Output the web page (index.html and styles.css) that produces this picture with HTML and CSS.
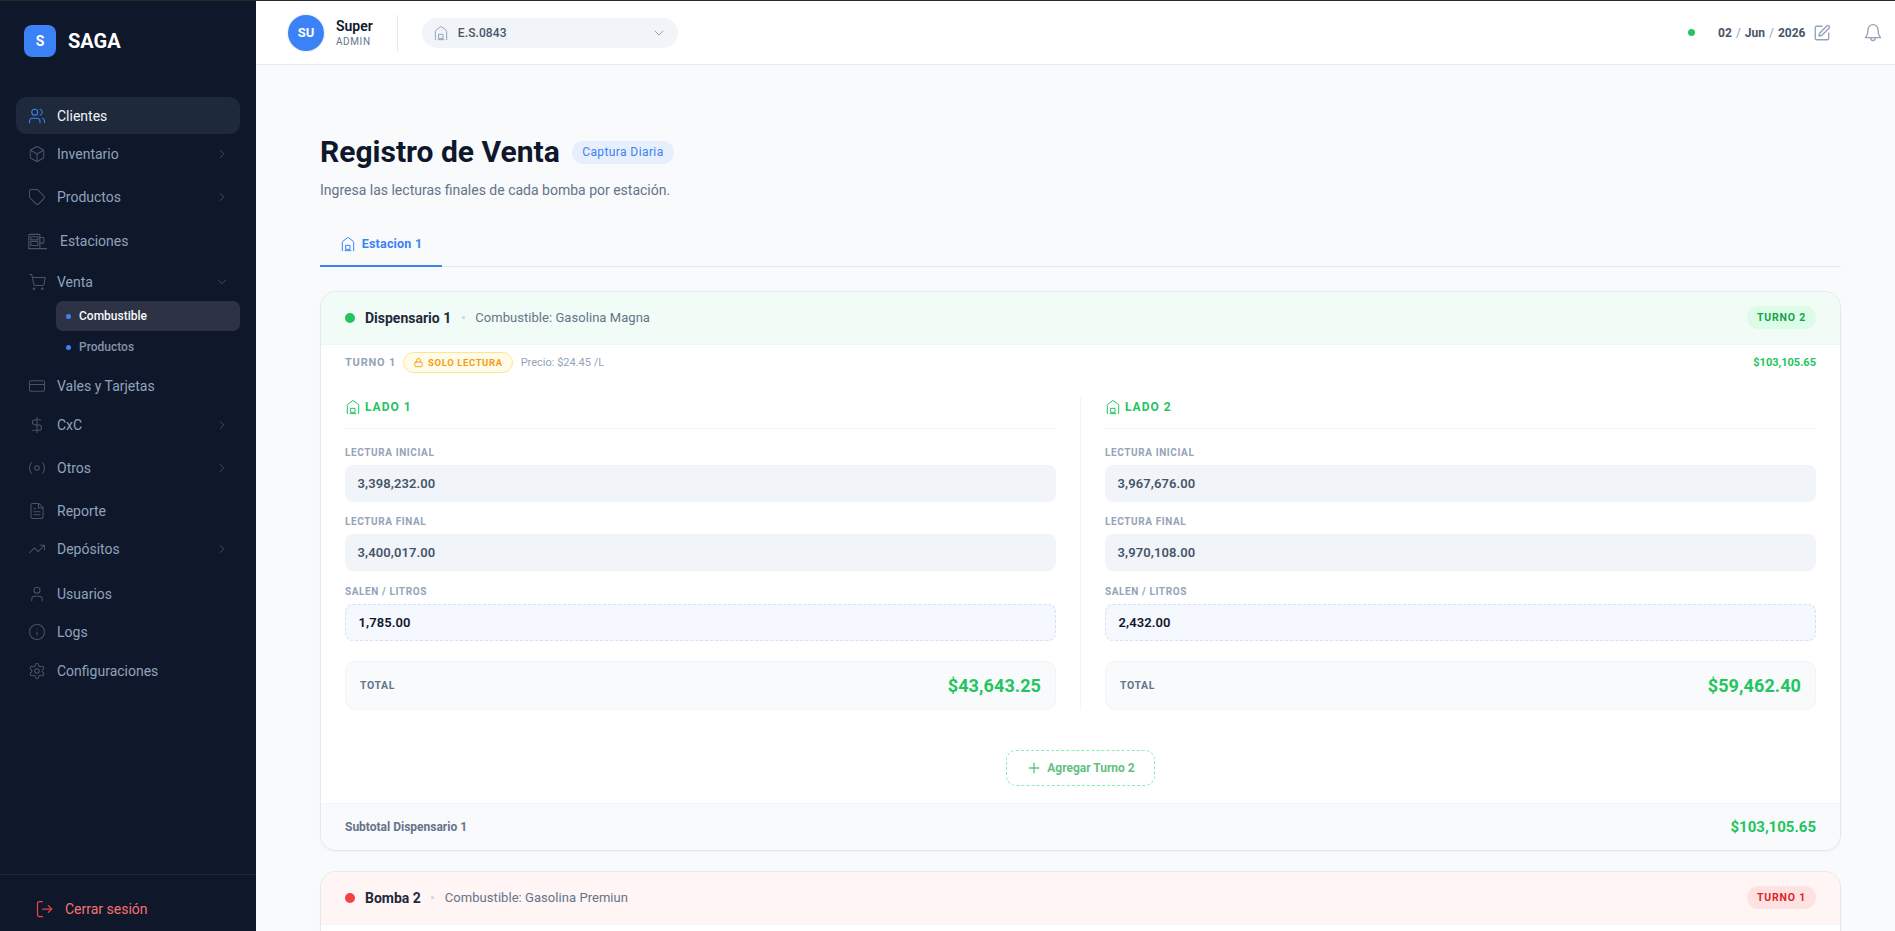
FILE: index.html
```html
<!DOCTYPE html>
<html lang="es">
<head>
<meta charset="utf-8">
<title>Registro de Venta</title>
<link rel="stylesheet" href="styles.css">
</head>
<body>
<svg class="defs" width="0" height="0" aria-hidden="true">
  <symbol id="house" viewBox="0 0 24 24"><path d="M3.500 22V9.500a2 2 0 0 1 .8-1.600l6.500-5a2 2 0 0 1 2.400 0l6.500 5a2 2 0 0 1 .8 1.600V22"/><path d="M7.500 22h9"/><rect x="9" y="14" width="6" height="6"/></symbol>
  <symbol id="chev-r" viewBox="0 0 24 24"><path d="m9 6 6 6-6 6"/></symbol>
  <symbol id="chev-d" viewBox="0 0 24 24"><path d="m6 9 6 6 6-6"/></symbol>
</svg>
<div class="app">
  <aside class="sidebar">
    <div class="brand"><span class="logo">S</span><span class="brand-name">SAGA</span></div>
    <nav class="nav">
      <a class="item active"><svg class="ic" viewBox="0 0 24 24"><path d="M16 21v-2a4 4 0 0 0-4-4H6a4 4 0 0 0-4 4v2"/><circle cx="9" cy="7" r="4"/><path d="M22 21v-2a4 4 0 0 0-3-3.870"/><path d="M16 3.130a4 4 0 0 1 0 7.750"/></svg>Clientes</a>
      <div class="group tight"><a class="item"><svg class="ic" viewBox="0 0 24 24"><path d="M21 8a2 2 0 0 0-1-1.730l-7-4a2 2 0 0 0-2 0l-7 4A2 2 0 0 0 3 8v8a2 2 0 0 0 1 1.730l7 4a2 2 0 0 0 2 0l7-4A2 2 0 0 0 21 16Z"/><path d="m3.300 7 8.700 5 8.700-5"/><path d="M12 22V12"/></svg>Inventario<svg class="chev"><use href="#chev-r"/></svg></a></div>
      <div class="group tight"><a class="item"><svg class="ic" viewBox="0 0 24 24"><path d="M2 4a2 2 0 0 1 2-2h7.600a2 2 0 0 1 1.400.6l8.400 8.400a2 2 0 0 1 0 2.800l-7.600 7.600a2 2 0 0 1-2.800 0L2.600 13A2 2 0 0 1 2 11.600Z"/></svg>Productos<svg class="chev"><use href="#chev-r"/></svg></a></div>
      <a class="item tall"><svg class="ic wide" viewBox="0 0 24 20"><path d="M1 19V2a1 1 0 0 1 1-1h12a1 1 0 0 1 1 1v17"/><path d="M0 19h24"/><rect x="3.500" y="4" width="9" height="4"/><rect x="3.500" y="10" width="9" height="5"/><path d="M15 5h4a1 1 0 0 1 1 1v5a1 1 0 0 1-1 1h-4"/></svg>Estaciones</a>
      <div class="group venta">
        <a class="item"><svg class="ic" viewBox="0 0 24 24"><circle cx="8" cy="21" r="1"/><circle cx="19" cy="21" r="1"/><path d="M2 2h3l2.700 13a2 2 0 0 0 2 1.600h9.700a2 2 0 0 0 2-1.600L23 6H6"/></svg>Venta<svg class="chev"><use href="#chev-d"/></svg></a>
        <div class="subnav">
          <a class="subitem on"><i class="bullet"></i>Combustible</a>
          <a class="subitem"><i class="bullet"></i>Productos</a>
        </div>
      </div>
      <a class="item"><svg class="ic" viewBox="0 0 24 24"><rect x="2" y="5" width="20" height="14" rx="2"/><path d="M2 10h20"/></svg>Vales y Tarjetas</a>
      <div class="group"><a class="item"><svg class="ic" viewBox="0 0 24 24"><path d="M12 2v20"/><path d="M17 5H9.500a3.500 3.500 0 0 0 0 7h5a3.500 3.500 0 0 1 0 7H6"/></svg>CxC<svg class="chev"><use href="#chev-r"/></svg></a></div>
      <div class="group"><a class="item"><svg class="ic" viewBox="0 0 24 24"><circle cx="12" cy="12" r="3"/><path d="M4.500 5C1.200 9 1.200 15 4.500 19"/><path d="M19.500 5c3.300 4 3.300 10 0 14"/></svg>Otros<svg class="chev"><use href="#chev-r"/></svg></a></div>
      <a class="item"><svg class="ic" viewBox="0 0 24 24"><path d="M14.500 2H6a2 2 0 0 0-2 2v16a2 2 0 0 0 2 2h12a2 2 0 0 0 2-2V7.500Z"/><path d="M14 2v6h6"/><path d="M8 13h8"/><path d="M8 17h8"/><path d="M8 9h2"/></svg>Reporte</a>
      <div class="group loose"><a class="item"><svg class="ic" viewBox="0 0 24 24"><path d="m22 7-8.500 8.500-5-5L2 17"/><path d="M16 7h6v6"/></svg>Depósitos<svg class="chev"><use href="#chev-r"/></svg></a></div>
      <a class="item"><svg class="ic" viewBox="0 0 24 24"><path d="M19 21v-2a4 4 0 0 0-4-4H9a4 4 0 0 0-4 4v2"/><circle cx="12" cy="7" r="4"/></svg>Usuarios</a>
      <a class="item"><svg class="ic" viewBox="0 0 24 24"><circle cx="12" cy="12" r="10"/><path d="M12 16v-4"/><path d="M12 8h.01"/></svg>Logs</a>
      <a class="item"><svg class="ic" viewBox="0 0 24 24"><path d="M12.220 2h-.44a2 2 0 0 0-2 2v.18a2 2 0 0 1-1 1.730l-.43.25a2 2 0 0 1-2 0l-.15-.08a2 2 0 0 0-2.730.73l-.22.38a2 2 0 0 0 .73 2.730l.15.1a2 2 0 0 1 1 1.720v.51a2 2 0 0 1-1 1.740l-.15.09a2 2 0 0 0-.73 2.730l.22.38a2 2 0 0 0 2.730.73l.15-.08a2 2 0 0 1 2 0l.43.25a2 2 0 0 1 1 1.730V20a2 2 0 0 0 2 2h.44a2 2 0 0 0 2-2v-.18a2 2 0 0 1 1-1.730l.43-.25a2 2 0 0 1 2 0l.15.08a2 2 0 0 0 2.730-.73l.22-.39a2 2 0 0 0-.73-2.730l-.15-.08a2 2 0 0 1-1-1.740v-.5a2 2 0 0 1 1-1.740l.15-.09a2 2 0 0 0 .73-2.730l-.22-.38a2 2 0 0 0-2.730-.73l-.15.08a2 2 0 0 1-2 0l-.43-.25a2 2 0 0 1-1-1.730V4a2 2 0 0 0-2-2z"/><circle cx="12" cy="12" r="3"/></svg>Configuraciones</a>
    </nav>
    <div class="logout"><a class="logout-link"><svg class="ic-out" viewBox="0 0 24 24"><path d="M9 3H5a2 2 0 0 0-2 2v14a2 2 0 0 0 2 2h4"/><path d="m16 16 4-4-4-4"/><path d="M20 12H9"/></svg>Cerrar sesión</a></div>
  </aside>

  <div class="content">
    <header class="topbar">
      <div class="user">
        <span class="avatar">SU</span>
        <div class="user-text"><div class="user-name">Super</div><div class="user-role">ADMIN</div></div>
      </div>
      <div class="select">
        <svg class="house select-ic"><use href="#house"/></svg>
        <span class="select-text">E.S.0843</span>
        <svg class="select-chev"><use href="#chev-d"/></svg>
      </div>
      <div class="top-right">
        <i class="status"></i>
        <div class="date"><span>02</span><em>/</em><span>Jun</span><em>/</em><span>2026</span></div>
        <svg class="edit" viewBox="0 0 24 24"><path d="M12 3H5a2 2 0 0 0-2 2v14a2 2 0 0 0 2 2h14a2 2 0 0 0 2-2v-7"/><path d="M18.400 2.600a2.120 2.120 0 0 1 3 3L12 15l-4 1 1-4Z"/></svg>
        <svg class="bell" viewBox="0 0 24 24"><path d="M6 8a6 6 0 0 1 12 0c0 7 2.500 8.500 3 9.500H3c.5-1 3-2.500 3-9.500"/><path d="M9.500 17.500v1a2.500 2.500 0 0 0 5 0v-1"/></svg>
      </div>
    </header>

    <main class="main">
      <div class="title-row"><h1 class="title">Registro de Venta</h1><span class="title-badge">Captura Diaria</span></div>
      <p class="subtitle">Ingresa las lecturas finales de cada bomba por estación.</p>
      <div class="tabs"><a class="tab"><svg class="house tab-ic"><use href="#house"/></svg>Estacion 1</a></div>

      <section class="card">
        <div class="card-head green">
          <i class="dot dot-green"></i><span class="pump">Dispensario 1</span><i class="sep"></i><span class="fuel">Combustible: Gasolina Magna</span>
          <span class="turn-pill pill-green">TURNO 2</span>
        </div>
        <div class="turn-row">
          <span class="turn-label">TURNO 1</span>
          <span class="lock-badge"><svg class="lock" viewBox="0 0 24 24"><rect x="4" y="11" width="16" height="10" rx="2"/><path d="M8 11V7a4 4 0 0 1 8 0v4"/></svg>SOLO LECTURA</span>
          <span class="price">Precio: $24.45 /L</span>
          <span class="turn-total">$103,105.65</span>
        </div>
        <div class="sides">
          <div class="side side-l">
            <div class="side-head"><svg class="house side-ic"><use href="#house"/></svg>LADO 1</div>
            <label class="lbl">LECTURA INICIAL</label><div class="field">3,398,232.00</div>
            <label class="lbl">LECTURA FINAL</label><div class="field">3,400,017.00</div>
            <label class="lbl lbl-salen">SALEN / LITROS</label><div class="field calc">1,785.00</div>
            <div class="total"><span class="total-lbl">TOTAL</span><span class="total-val">$43,643.25</span></div>
          </div>
          <div class="side side-r">
            <div class="side-head"><svg class="house side-ic"><use href="#house"/></svg>LADO 2</div>
            <label class="lbl">LECTURA INICIAL</label><div class="field">3,967,676.00</div>
            <label class="lbl">LECTURA FINAL</label><div class="field">3,970,108.00</div>
            <label class="lbl lbl-salen">SALEN / LITROS</label><div class="field calc">2,432.00</div>
            <div class="total"><span class="total-lbl">TOTAL</span><span class="total-val">$59,462.40</span></div>
          </div>
        </div>
        <div class="add-wrap"><a class="add"><svg class="plus" viewBox="0 0 24 24"><path d="M5 12h14"/><path d="M12 5v14"/></svg>Agregar Turno 2</a></div>
        <div class="card-foot"><span class="foot-lbl">Subtotal Dispensario 1</span><span class="foot-val">$103,105.65</span></div>
      </section>

      <section class="card">
        <div class="card-head red">
          <i class="dot dot-red"></i><span class="pump">Bomba 2</span><i class="sep"></i><span class="fuel">Combustible: Gasolina Premiun</span>
          <span class="turn-pill pill-red">TURNO 1</span>
        </div>
        <div class="card-rest"></div>
      </section>
    </main>
  </div>
</div>
</body>
</html>
```
FILE: styles.css
```css
* { box-sizing: border-box; }
html, body { margin: 0; height: 100%; overflow: hidden; }
body { font-family: Roboto, "Liberation Sans", sans-serif; color: #0f172a; background: #f8fafc; border-top: 1px solid #27272a; }
a { text-decoration: none; color: inherit; display: flex; }
.defs { position: absolute; }
svg { fill: none; stroke: currentColor; stroke-width: 1.5; stroke-linecap: round; stroke-linejoin: round; flex: none; }
.app { display: flex; height: 100%; }

/* sidebar */
.sidebar { width: 256px; flex: none; background: #0f172a; display: flex; flex-direction: column; color: #94a3b8; }
.brand { display: flex; gap: 12px; padding: 24px 24px 0; height: 96px; align-items: flex-start; }
.logo { width: 32px; height: 32px; border-radius: 8px; background: #3b82f6; color: #fff; font-size: 14px; font-weight: 700; display: flex; align-items: center; justify-content: center; }
.brand-name { font-size: 20px; font-weight: 700; color: #fff; line-height: 32px; }
.nav { display: flex; flex-direction: column; gap: 1.500px; padding: 0 16px; flex: 1; }
.item { height: 37px; align-items: center; padding: 0 12px; border-radius: 10px; font-size: 14px; color: #8fa3bd; }
.item.active { background: #1e293b; color: #f1f5f9; }
.item.tall { height: 41px; }
.ic { width: 18px; height: 18px; margin-right: 11px; color: #475569; stroke-width: 1.4; }
.active .ic { color: #3b82f6; }
.ic.wide { width: 19px; height: 17px; margin-right: 13px; }
.chev { width: 14px; height: 14px; margin-left: auto; margin-right: -1px; color: #475569; }
.group { padding-bottom: 4.600px; }
.group.tight { padding-bottom: 4px; }
.group.loose { padding-bottom: 6.200px; }
.venta { padding-bottom: 0; }
.subnav { padding-left: 40px; display: flex; flex-direction: column; gap: 1px; margin-top: 1px; margin-bottom: 4px; }
.subitem { height: 30px; align-items: center; border-radius: 7px; padding-left: 10px; font-size: 12px; color: #8493a8; font-weight: 500; }
.subitem.on { background: #2d3345; color: #f8fafc; }
.bullet { width: 5px; height: 5px; border-radius: 50%; background: #3b82f6; margin-right: 8px; }
.logout { height: 57px; border-top: 1px solid #1e293b; padding: 12px 35px 0; display: flex; align-items: center; }
.logout-link { align-items: center; color: #f87171; font-size: 14px; }
.ic-out { width: 20px; height: 20px; margin-right: 10px; color: #ef4444; }

/* topbar */
.content { flex: 1; min-width: 0; display: flex; flex-direction: column; }
.topbar { height: 64px; flex: none; background: #fff; border-bottom: 1px solid #e2e8f0; display: flex; align-items: center; padding: 0 12.500px 0 32px; }
.user { display: flex; align-items: center; height: 36px; padding-right: 24px; border-right: 1px solid #e2e8f0; margin-right: 24px; }
.avatar { width: 36px; height: 36px; border-radius: 50%; background: #3b82f6; color: #fff; font-size: 13px; font-weight: 700; display: flex; align-items: center; justify-content: center; box-shadow: 0 0 0 1.500px #f1f5f9; margin-right: 12px; }
.user-name { font-size: 14px; font-weight: 600; line-height: 18px; color: #0f172a; }
.user-role { font-size: 10px; letter-spacing: .6px; line-height: 13px; color: #64748b; }
.select { width: 256px; height: 30px; border-radius: 15px; background: #f1f5f9; display: flex; align-items: center; padding: 0 11px 0 11px; }
.house { width: 16px; height: 16px; }
.select-ic { color: #94a3b8; margin-right: 9px; }
.select-text { font-size: 12px; font-weight: 500; color: #475569; letter-spacing: .1px; }
.select-chev { width: 16px; height: 16px; margin-left: auto; color: #94a3b8; }
.top-right { margin-left: auto; display: flex; align-items: center; }
.status { width: 7px; height: 7px; border-radius: 50%; background: #22c55e; margin-right: 23px; }
.date { display: flex; gap: 4px; font-size: 12px; font-weight: 700; color: #475569; }
.date em { font-style: normal; font-weight: 400; color: #94a3b8; }
.edit { width: 18px; height: 18px; color: #94a3b8; margin-left: 7px; stroke-width: 1.800; }
.bell { width: 20px; height: 20px; color: #94a3b8; margin-left: 32px; stroke-width: 1.600; }

/* main */
.main { flex: 1; min-height: 0; overflow: hidden; padding: 69px 54px 0 64px; }
.title-row { display: flex; align-items: center; gap: 12px; height: 36px; }
.title { margin: 0; font-size: 30px; font-weight: 700; line-height: 36px; color: #0f172a; }
.title-badge { height: 23px; padding: 0 10.500px; border-radius: 12px; background: #e7effc; color: #3b82f6; font-size: 12px; font-weight: 400; line-height: 23px; letter-spacing: .4px; }
.subtitle { margin: 10px 0 0; font-size: 14px; line-height: 20px; color: #64748b; }
.tabs { margin-top: 22px; height: 45px; border-bottom: 1px solid #e2e8f0; display: flex; }
.tab { width: 122px; height: 45px; border-bottom: 2px solid #3b82f6; align-items: center; justify-content: center; font-size: 12.500px; font-weight: 700; color: #3b82f6; letter-spacing: .2px; }
.tab-ic { margin-right: 6px; }

.card { margin-top: 24px; background: #fff; border: 1px solid #e2e8f0; border-radius: 16px; overflow: hidden; box-shadow: 0 1px 2px rgba(15, 23, 42, .04); }
.card + .card { margin-top: 20px; }
.card-head { height: 53px; display: flex; align-items: center; padding: 0 24px 1px; border-bottom: 1px solid #f1f5f9; }
.green { background: #f1fcf6; }
.red { background: #fef5f4; }
.dot { width: 10px; height: 10px; border-radius: 50%; margin-right: 10px; }
.dot-green { background: #22c55e; }
.dot-red { background: #ef4444; }
.pump { font-size: 14px; font-weight: 700; color: #1e293b; }
.sep { width: 3px; height: 3px; border-radius: 50%; background: #cbd5e1; margin: 0 10.500px; }
.fuel { font-size: 13px; font-weight: 400; letter-spacing: .05px; color: #64748b; }
.turn-pill { margin-left: auto; height: 23px; line-height: 23px; padding: 0 10px; border-radius: 12px; font-size: 10.500px; font-weight: 700; letter-spacing: .8px; }
.pill-green { background: #dcfce7; color: #16a34a; }
.pill-red { background: #fee2e2; color: #dc2626; }
.card-rest { height: 60px; }

.turn-row { display: flex; align-items: center; padding: 7px 24px 0; height: 28px; }
.turn-label { font-size: 11px; font-weight: 700; letter-spacing: .8px; color: #94a3b8; margin-right: 7px; }
.lock-badge { display: flex; align-items: center; height: 21px; padding: 0 9px; border-radius: 11px; background: #fffbeb; border: 1px solid #fde68a; color: #f59e0b; font-size: 9.500px; font-weight: 700; letter-spacing: .6px; }
.lock { width: 11px; height: 11px; margin-right: 4px; stroke-width: 2; }
.price { font-size: 11px; color: #94a3b8; margin-left: 8px; }
.turn-total { margin-left: auto; font-size: 11px; font-weight: 700; color: #22c55e; }

.sides { display: grid; grid-template-columns: 735px 1fr; padding: 0 24px; margin-top: 24px; }
.side-l { padding-right: 24px; }
.side-r { padding-left: 24px; border-left: 1px solid #f1f5f9; }
.side-head { display: flex; align-items: center; height: 32px; padding-bottom: 11px; border-bottom: 1px solid #f1f5f9; color: #22c55e; font-size: 12px; font-weight: 700; letter-spacing: 1px; margin-bottom: 16px; }
.side-ic { margin-right: 4px; }
.lbl { display: block; font-size: 10px; font-weight: 700; letter-spacing: .6px; line-height: 15px; color: #94a3b8; margin-bottom: 5px; }
.lbl-salen { padding-top: 1px; }
.field { height: 37px; border-radius: 8px; background: #f1f5f9; display: flex; align-items: center; padding: 0 12.500px; font-size: 13px; font-weight: 600; letter-spacing: .1px; color: #475569; margin-bottom: 12px; }
.field.calc { background: #f5f8fe; border: 1px dashed #d2e2fb; color: #0f172a; margin-bottom: 20px; }
.total { height: 49px; border-radius: 10px; background: #f8fafc; border: 1px solid #f1f5f9; display: flex; align-items: center; justify-content: space-between; padding: 0 14px; }
.total-lbl { font-size: 10.500px; font-weight: 700; letter-spacing: .6px; color: #64748b; }
.total-val { font-size: 18px; font-weight: 700; color: #22c55e; letter-spacing: .1px; }
.add-wrap { display: flex; justify-content: center; padding: 40px 0 17px; }
.add { width: 149px; height: 36px; align-items: center; justify-content: center; border: 1px dashed #86efac; border-radius: 10px; font-size: 12px; font-weight: 700; color: #62c083; }
.plus { width: 16px; height: 16px; margin-right: 5px; stroke-width: 2; }
.card-foot { height: 47px; display: flex; align-items: center; justify-content: space-between; padding: 0 24px; background: #f8fafc; border-top: 1px solid #f1f5f9; }
.foot-lbl { font-size: 12px; font-weight: 700; color: #64748b; }
.foot-val { font-size: 15px; font-weight: 700; color: #22c55e; }
```
